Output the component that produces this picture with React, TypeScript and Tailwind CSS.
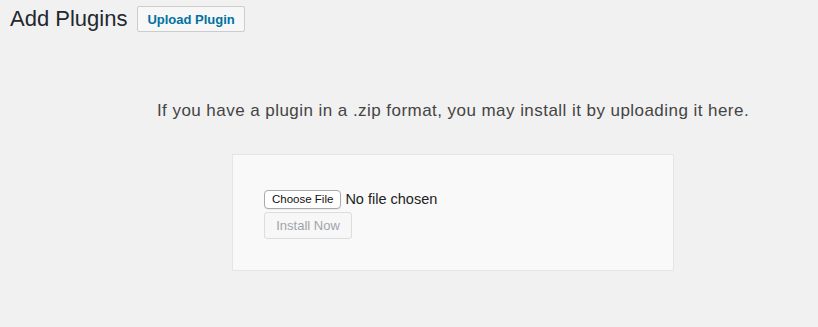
import React from 'react';

const font = { fontFamily: '"Liberation Sans", Arial, sans-serif' };

export default function App() {
  return (
    <div
      className="w-[818px] h-[327px] overflow-hidden bg-[#f1f1f1] text-[#23282d]"
      style={font}
    >
      {/* Page header */}
      <div className="flex items-center pl-[10px] pt-[6px]">
        <h1 className="text-[22px] leading-[26px] font-normal text-[#23282d]">Add Plugins</h1>
        <button
          type="button"
          className="ml-[10px] h-[26px] px-[9px] rounded-[2px] border border-[#ccc] bg-[#f7f7f7] text-[13px] font-bold text-[#0071a1] leading-none"
        >
          Upload Plugin
        </button>
      </div>

      {/* Upload section */}
      <div className="w-[906px] text-center">
        <p className="mt-[67px] text-[17px] leading-[24px] tracking-[0.45px] text-[#444]">
          If you have a plugin in a .zip format, you may install it by uploading it here.
        </p>
        <div className="mx-auto mt-[31px] w-[442px] h-[117px] border border-[#e5e5e5] bg-[#f9f9f9] pl-[31px] pt-[35px] text-left">
          <div className="flex items-center h-[19px]">
            <span className="flex items-center h-[19px] px-[7px] rounded-[4px] border border-[#a9a9a9] bg-white text-[11.5px] text-[#111] leading-none shadow-[0_1px_0_rgba(0,0,0,0.05)]">
              Choose File
            </span>
            <span className="ml-[4px] text-[14.5px] text-[#222]">No file chosen</span>
          </div>
          <button
            type="button"
            disabled
            className="mt-[3px] h-[27px] w-[88px] rounded-[3px] border border-[#ddd] bg-[#f7f7f7] text-[13px] text-[#a0a5aa] leading-none"
          >
            Install Now
          </button>
        </div>
      </div>
    </div>
  );
}
